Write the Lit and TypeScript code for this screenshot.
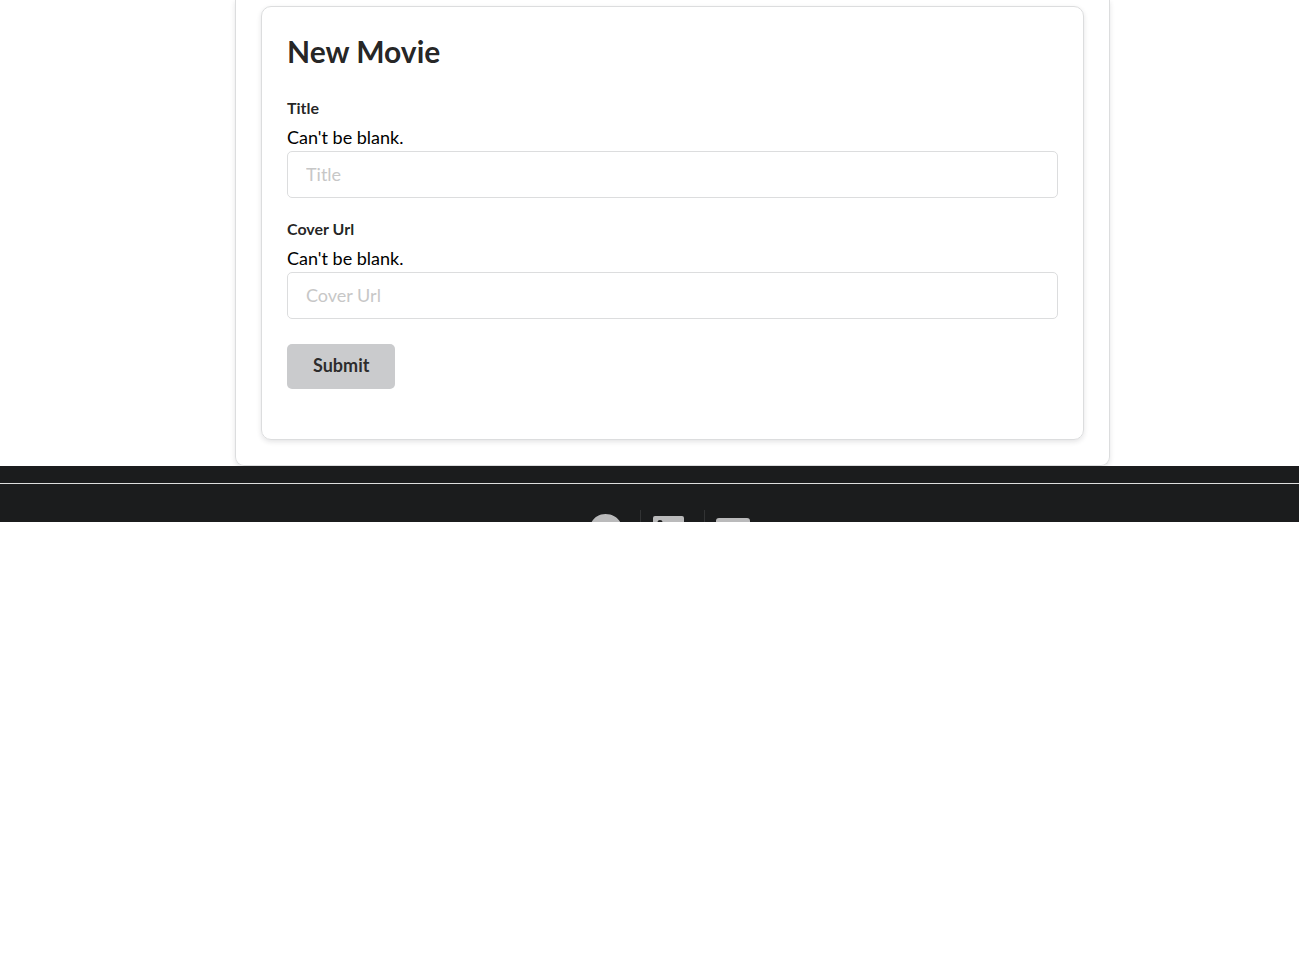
import { LitElement, html, css } from "lit";
import { customElement } from "lit/decorators.js";

@customElement("app-root")
export class AppRoot extends LitElement {
  static styles = css`
    :host {
      display: block;
      min-height: 100vh;
      background: #fff;
      color: rgba(0, 0, 0, 0.87);
      font: 18px/26px Lato, "Liberation Sans", sans-serif;
    }
    *, *::before { box-sizing: border-box; }
    .page { padding-left: 46px; }
    .outer {
      max-width: 875px;
      margin: 0 auto;
      padding: 6px 25px 25px;
      border: 1px solid #dcddde;
      border-top: 0;
      border-radius: 0 0 9px 9px;
      box-shadow: 0 2px 5px rgba(34, 36, 38, 0.12);
    }
    .card {
      padding: 25px 25px 50px;
      border: 1px solid #dcddde;
      border-radius: 10px;
      box-shadow: 0 2px 5px rgba(34, 36, 38, 0.12);
    }
    h1 {
      margin: 0 0 26px;
      font-size: 30px;
      line-height: 38px;
      font-weight: 700;
    }
    .field { margin-bottom: 19px; }
    label {
      display: block;
      margin-bottom: 4px;
      font-size: 16px;
      line-height: 24px;
      font-weight: 700;
    }
    .error {
      margin-bottom: 1px;
      color: #000;
    }
    input {
      display: block;
      width: 100%;
      height: 47px;
      padding: 0 18px 2px;
      border: 1px solid #dcddde;
      border-radius: 5px;
      background: #fff;
      color: inherit;
      font: inherit;
      outline: none;
    }
    input::placeholder { color: #c7c7c7; opacity: 1; }
    button {
      display: block;
      margin-top: 25px;
      height: 45px;
      padding: 0 26px 4px;
      border: 0;
      border-radius: 5px;
      background: #cacbcd;
      color: rgba(0, 0, 0, 0.8);
      font: 700 18px/26px Lato, "Liberation Sans", sans-serif;
    }
    footer {
      height: 56px;
      overflow: hidden;
      padding-top: 17px;
      background: #1b1c1d;
    }
    .rule { border-top: 1px solid #dedede; }
    nav {
      display: flex;
      justify-content: center;
      padding: 26px 0 0 45px;
    }
    nav a {
      width: 64px;
      padding-left: 10px;
      border-left: 1px solid #323334;
      color: #bababb;
    }
    nav a:first-child { border-color: transparent; }
    svg { display: block; width: 36px; height: 36px; margin-top: 3px; fill: currentColor; }
  `;

  private field(id: string, label: string) {
    return html`<div class="field">
      <label for=${id}>${label}</label>
      <div class="error" id="${id}-error">Can't be blank.</div>
      <input id=${id} type="text" placeholder=${label} aria-describedby="${id}-error" />
    </div>`;
  }

  render() {
    return html`
      <main class="page">
        <section class="outer">
          <form class="card" @submit=${(e: Event) => e.preventDefault()}>
            <h1>New Movie</h1>
            ${this.field("title", "Title")} ${this.field("cover", "Cover Url")}
            <button type="submit">Submit</button>
          </form>
        </section>
      </main>
      <footer>
        <div class="rule"></div>
        <nav>
          <a href="#github" aria-label="GitHub"><svg viewBox="-1 0 36 36"><path d="M17.500 1C8 1 1.500 8.500 1.500 17.500c0 8 5 14 11.500 17.500v-4c-4 1-5-2-6-3 3 0 3 2 6 1 0-1 .5-2 1-2.500-4-.5-7.500-2-7.500-8 0-2 .5-3.200 1.700-4.500-.4-1.200-.3-3 .2-4.500 2 0 3.500 1 4.800 2 3-.8 6.500-.8 9.600 0 1.500-1 3-2 4.800-2 .5 1.500.6 3.300.2 4.500 1.200 1.300 1.700 2.500 1.700 4.500 0 6-3.500 7.500-7.500 8 1 1 1 2 1 3.500v5c6.500-3 11.500-9.500 11.500-17.500C34.500 8.500 27.500 1 17.500 1z"/></svg></a>
          <a href="#linkedin" aria-label="LinkedIn"><svg viewBox="0 0 36 36"><path fill-rule="evenodd" d="M4 3h27a2 2 0 0 1 2 2v27a2 2 0 0 1-2 2H4a2 2 0 0 1-2-2V5a2 2 0 0 1 2-2zm5 4a2.600 2.600 0 1 0 0 5.200 2.600 2.600 0 0 0 0-5.200zM7 15v14h4.500V15zm7.500 0v14H19v-7c0-4 5-4 5 0v7h4.500v-8c0-7-7-8-9.500-4v-2z"/></svg></a>
          <a href="#email" aria-label="Email"><svg viewBox="0 0 36 36"><path d="M4 5h28a3 3 0 0 1 3 3v2L18 22 1 10V8a3 3 0 0 1 3-3zM1 14l17 12 17-12v15a3 3 0 0 1-3 3H4a3 3 0 0 1-3-3z"/></svg></a>
        </nav>
      </footer>
    `;
  }
}
